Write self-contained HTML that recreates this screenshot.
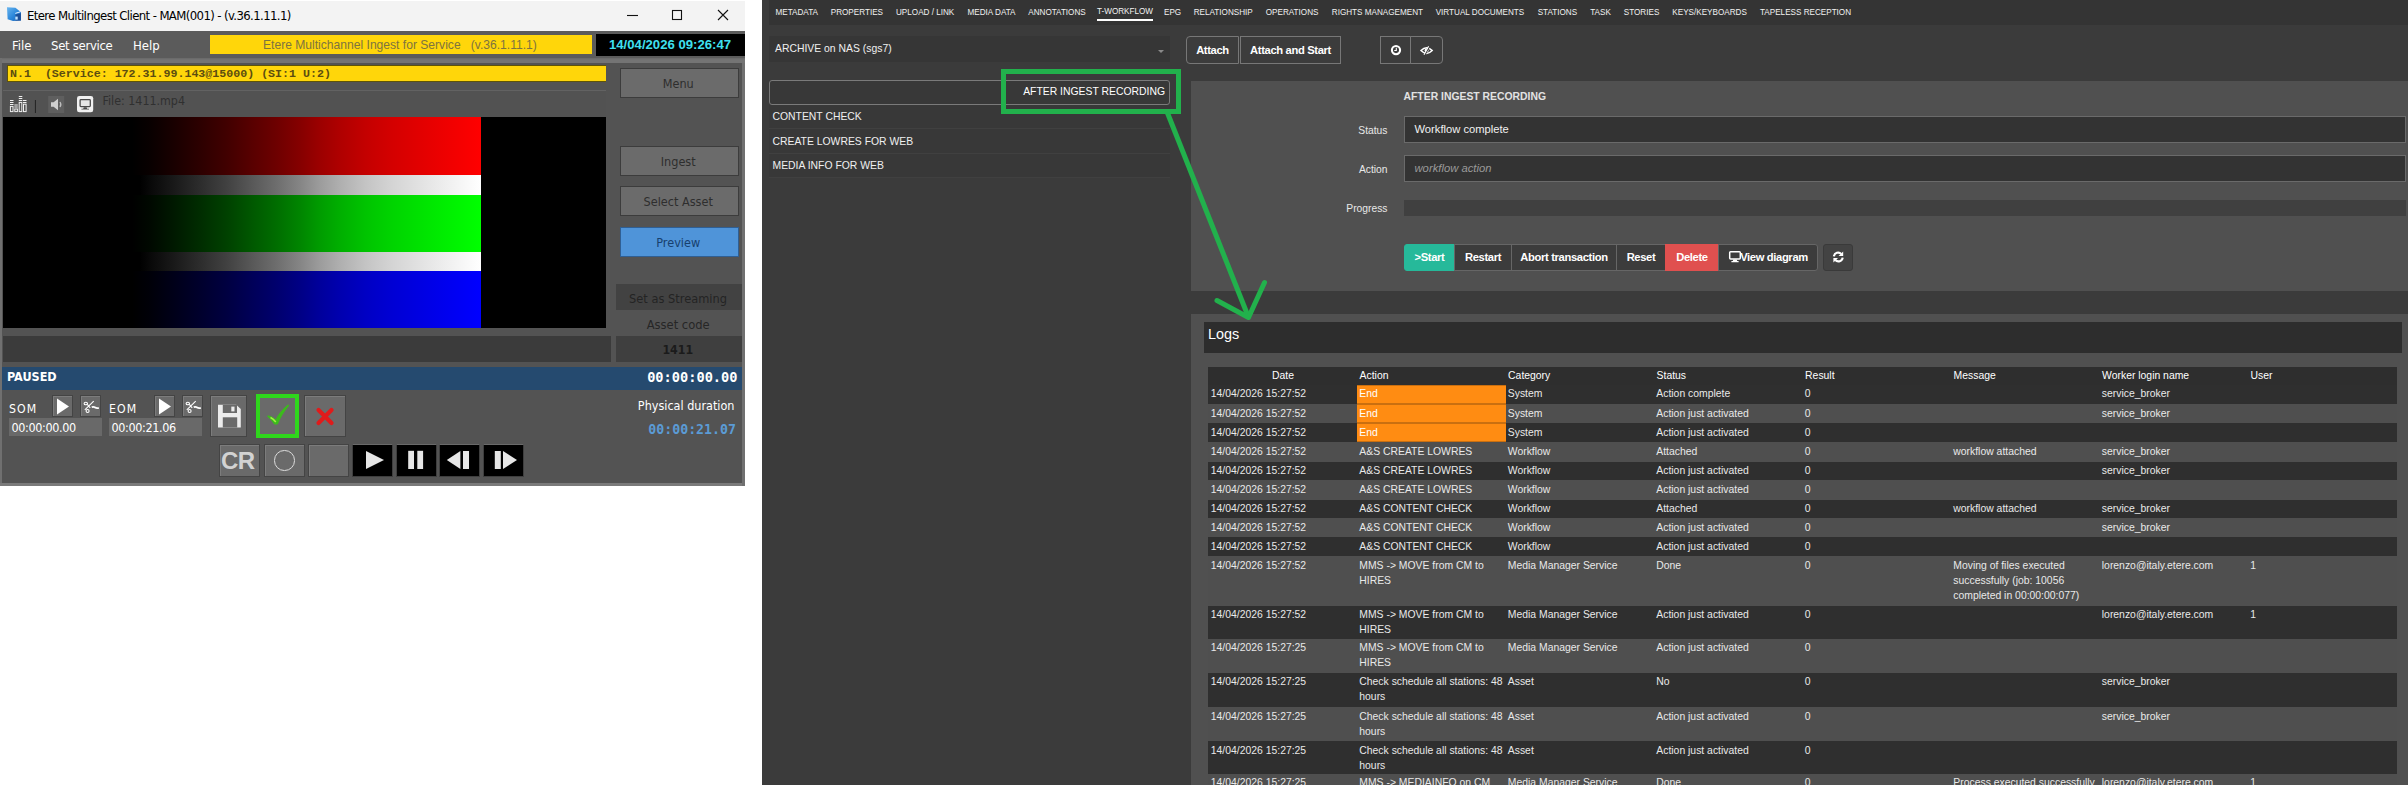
<!DOCTYPE html>
<html lang="en">
<head>
<meta charset="utf-8">
<title>Etere MultiIngest Client / T-Workflow</title>
<style>
*{box-sizing:border-box;margin:0;padding:0}
html,body{width:2408px;height:785px;overflow:hidden;background:#fff}
body{position:relative;font-family:"Liberation Sans",sans-serif}
.a{position:absolute}
.t{position:absolute;white-space:nowrap;line-height:1}
/* ---------- left window ---------- */
#win{position:absolute;left:0;top:0;width:745px;height:486px;background:#535353;overflow:hidden;font-family:"DejaVu Sans Condensed","DejaVu Sans","Liberation Sans",sans-serif}
#tb{left:0;top:0;width:745px;height:31px;background:#f3f3f3}
#menu{left:0;top:31px;width:745px;height:27px;background:#5b5b5b}
.mi{color:#fff;font-size:13px;top:39px}
.sb{position:absolute;left:620px;width:119px;height:30px;background:#6b6b6b;border:1px solid #3c3c3c;color:#2e2e2e;font-size:12.550px;text-align:center;line-height:29px;padding-right:2.600px}
.ib{position:absolute;background:#6a6a6a;border:1px solid #444;box-shadow:inset 1px 1px 0 #7c7c7c}
.kb{position:absolute;top:444.400px;height:33px;width:41px;background:#000;border:1px solid #3e3e3e;border-top-color:#6a6a6a}
/* ---------- right panel ---------- */
#rp{position:absolute;left:762px;top:0;width:1646px;height:785px;background:#3b3b3b;overflow:hidden;font-family:"Liberation Sans",sans-serif;color:#eee}

#tabs{position:absolute;left:7px;top:0;width:1639px;height:25px;background:#343434}
#tabs span{position:absolute;top:7.500px;font-size:8.150px;line-height:9px;color:#f2f2f2;white-space:nowrap}
.btn{position:absolute;height:27.500px;border:1px solid #777;background:#3c3c3c;color:#fff;font-weight:bold;font-size:11.200px;line-height:27px;text-align:center;white-space:nowrap;letter-spacing:-0.350px}
.li{position:absolute;left:7px;width:401px;height:24.500px;background:#383838;border-bottom:1px solid #404040;color:#f0f0f0;font-size:10.400px;line-height:23.500px;padding-left:3.500px;white-space:nowrap}
.lbl{position:absolute;left:560px;width:65.500px;text-align:right;font-size:10.300px;color:#e8e8e8;white-space:nowrap;line-height:12px}
.inp{position:absolute;left:642px;width:1002px;height:26px;background:#333;border:1px solid #6a6a6a;color:#f0f0f0;font-size:11.200px;line-height:24px;padding-left:9.500px;white-space:nowrap}
#lg{position:absolute;left:446px;top:367.200px;width:1188.500px;height:420px;font-size:10.400px;line-height:15.100px;color:#e9e9e9}
#lg .r{position:absolute;left:0;width:1188.500px;overflow:hidden}
#lg .r span{position:absolute;top:1.500px;white-space:nowrap}
#lg .h{background:#2e2e2e;color:#fff}
#lg .h span{top:0.600px}
#lg .d{background:#2f2f2f}
#lg .l{background:#4f4f4f}
#lg .o{position:absolute;top:0;background:#ff8c12;border-top:1px solid #c96f10;border-bottom:1px solid #c96f10}
#lg .o+span{color:#fff}
</style>
</head>
<body>
<div id="win">
  <div class="a" id="tb"></div><div class="a" style="left:0;top:0;width:745px;height:1px;background:#fff"></div>
  <svg class="a" style="left:6px;top:6px" width="17" height="17" viewBox="6 6 17 17">
    <defs><linearGradient id="ig" x1="0" y1="0" x2="1" y2="1"><stop offset="0" stop-color="#6ab6ef"/><stop offset="0.550" stop-color="#2a86da"/><stop offset="1" stop-color="#1b62b4"/></linearGradient></defs>
    <path d="M7 7.200L15.500 7.800L21 12.200V20.600L13 21L7.600 19.200z" fill="url(#ig)"/>
    <path d="M15.500 14.500L20.800 13.200V20.400H15.500z" fill="#1d4f97"/><path d="M15.300 13.400l5.300-1.700" stroke="#e8f2ff" stroke-width="1"/><rect x="15.300" y="16.600" width="2.400" height="3" fill="#bfe3ff"/>
  </svg>
  <div class="t" style="left:27px;top:9px;font-size:13px;letter-spacing:-0.600px;color:#000">Etere MultiIngest Client - MAM(001) - (v.36.1.11.1)</div>
  <svg class="a" style="left:620px;top:5px" width="120" height="22" viewBox="0 0 120 22" fill="none" stroke="#111" stroke-width="1.1">
    <path d="M7 10.5h11"/><rect x="52.5" y="5.500" width="9" height="9"/><path d="M98 5l10 10M108 5l-10 10"/>
  </svg>
  <div class="a" id="menu"></div>
  <div class="t mi" style="left:12px">File</div>
  <div class="t mi" style="left:51px;letter-spacing:-0.300px">Set service</div>
  <div class="t mi" style="left:133px">Help</div>
  <div class="a" style="left:210px;top:35px;width:382px;height:19px;background:#ffd60a"></div>
  <div class="t" style="left:263px;top:38.500px;font-size:12.100px;color:#7d7340;font-family:'Liberation Sans',sans-serif">Etere Multichannel Ingest for Service&nbsp;&nbsp; (v.36.1.11.1)</div>
  <div class="a" style="left:596px;top:34px;width:149px;height:22px;background:#000"></div>
  <div class="t" style="left:609px;top:37.500px;font-size:13.150px;font-weight:bold;color:#3fe0f0;font-family:'Liberation Sans',sans-serif">14/04/2026 09:26:47</div>
  <!-- channel panel -->
  <div class="a" style="left:0;top:58px;width:745px;height:5px;background:linear-gradient(#686868,#747474 40%,#747474)"></div>
  <div class="a" style="left:6.500px;top:64.500px;width:599.500px;height:17px;background:#ffd60a;border:1px solid #5f5408;border-right:0"></div>
  <div class="t" style="left:10px;top:67.500px;font-size:11.640px;font-weight:bold;color:#5c4d10;font-family:'Liberation Mono',monospace">N.1&nbsp; (Service: 172.31.99.143@15000) (SI:1 U:2)</div>
  <div class="a" style="left:3px;top:90px;width:603px;height:27px;background:#525252;border-top:1px solid #626262"></div>
  <div class="t" style="left:102.500px;top:94.500px;font-size:12.350px;color:#303030">File: 1411.mp4</div>
  <!-- video -->
  <div class="a" style="left:3px;top:117px;width:603px;height:211px;background:#000"></div>
  <div class="a" style="left:3px;top:117px;width:478px;height:58px;background:linear-gradient(90deg,#000 0,rgb(0,0,0) 129px,rgb(9,0,0) 148px,rgb(26,0,0) 172px,rgb(46,0,0) 199px,rgb(66,0,0) 225px,rgb(89,0,0) 250px,rgb(110,0,0) 274px,rgb(133,0,0) 297px,rgb(156,0,0) 317px,rgb(176,0,0) 338px,rgb(196,0,0) 363px,rgb(212,0,0) 389px,rgb(237,0,0) 440px,rgb(255,0,0) 478px)"></div>
  <div class="a" style="left:3px;top:175px;width:478px;height:19.500px;background:linear-gradient(90deg,#000 0,rgb(0,0,0) 137px,rgb(9,9,9) 148px,rgb(26,26,26) 172px,rgb(46,46,46) 199px,rgb(66,66,66) 225px,rgb(89,89,89) 250px,rgb(110,110,110) 274px,rgb(133,133,133) 297px,rgb(156,156,156) 317px,rgb(176,176,176) 338px,rgb(196,196,196) 363px,rgb(212,212,212) 389px,rgb(237,237,237) 440px,rgb(255,255,255) 478px)"></div>
  <div class="a" style="left:3px;top:194.500px;width:478px;height:57.500px;background:linear-gradient(90deg,#000 0,rgb(0,0,0) 129px,rgb(0,9,0) 148px,rgb(0,26,0) 172px,rgb(0,46,0) 199px,rgb(0,66,0) 225px,rgb(0,89,0) 250px,rgb(0,110,0) 274px,rgb(0,133,0) 297px,rgb(0,156,0) 317px,rgb(0,176,0) 338px,rgb(0,196,0) 363px,rgb(0,212,0) 389px,rgb(0,237,0) 440px,rgb(0,255,0) 478px)"></div>
  <div class="a" style="left:3px;top:252px;width:478px;height:18.500px;background:linear-gradient(90deg,#000 0,rgb(0,0,0) 137px,rgb(9,9,9) 148px,rgb(26,26,26) 172px,rgb(46,46,46) 199px,rgb(66,66,66) 225px,rgb(89,89,89) 250px,rgb(110,110,110) 274px,rgb(133,133,133) 297px,rgb(156,156,156) 317px,rgb(176,176,176) 338px,rgb(196,196,196) 363px,rgb(212,212,212) 389px,rgb(237,237,237) 440px,rgb(255,255,255) 478px)"></div>
  <div class="a" style="left:3px;top:270.500px;width:478px;height:57.500px;background:linear-gradient(90deg,#000 0,rgb(0,0,0) 129px,rgb(0,0,9) 148px,rgb(0,0,26) 172px,rgb(0,0,46) 199px,rgb(0,0,66) 225px,rgb(0,0,89) 250px,rgb(0,0,110) 274px,rgb(0,0,133) 297px,rgb(0,0,156) 317px,rgb(0,0,176) 338px,rgb(0,0,196) 363px,rgb(0,0,212) 389px,rgb(0,0,237) 440px,rgb(0,0,255) 478px)"></div>
  <!-- side buttons -->
  <div class="sb" style="top:67.500px">Menu</div>
  <div class="sb" style="top:145.500px">Ingest</div>
  <div class="sb" style="top:185.500px">Select Asset</div>
  <div class="sb" style="top:226.500px;background:#4f94d9;border-color:#2f5f94;color:#17406e">Preview</div>
  <div class="a" style="left:616px;top:284px;width:126px;height:26px;background:#424242"></div>
  <div class="t" style="left:615px;width:126px;text-align:center;top:292.800px;font-size:12.700px;color:#242424">Set as Streaming</div>
  <div class="t" style="left:615.200px;width:126px;text-align:center;top:318.800px;font-size:12.800px;color:#262626">Asset code</div>
  <div class="a" style="left:616px;top:336px;width:126px;height:26px;background:#3f3f3f"></div>
  <div class="t" style="left:614.800px;width:126px;text-align:center;top:343.500px;font-size:12.300px;font-weight:bold;color:#1b1b1b">1411</div>
  <div class="a" style="left:2.500px;top:336px;width:608.500px;height:26px;background:#3b3b3b"></div>
  <!-- status bar -->
  <div class="a" style="left:2.400px;top:367px;width:739.600px;height:23px;background:#254a6f"></div>
  <div class="t" style="left:7px;top:371px;font-size:12.500px;font-weight:bold;color:#fff">PAUSED</div>
  <div class="t" style="right:7.500px;top:371px;font-size:13.650px;font-weight:bold;color:#fff;font-family:'DejaVu Sans Mono','Liberation Mono',monospace">00:00:00.00</div>

  <!-- toolbar icons -->
  <svg class="a" style="left:9px;top:95px" width="90" height="19" viewBox="0 0 90 19">
    <g fill="none" stroke="#f0f0f0" stroke-width="1">
      <rect x="1.400" y="11.400" width="2.600" height="5.200"/><rect x="5.800" y="14" width="2.600" height="2.600"/><rect x="10.200" y="7.400" width="2.600" height="9.200"/><rect x="14.500" y="9.200" width="2.600" height="7.400"/>
    </g>
    <g fill="#f0f0f0"><rect x="1" y="5" width="3.500" height="1"/><rect x="1" y="7" width="3.500" height="1"/><rect x="1" y="9" width="3.500" height="1"/><rect x="5.300" y="9.500" width="3.500" height="1"/><rect x="5.300" y="11.500" width="3.500" height="1"/><rect x="9.800" y="1" width="3.500" height="1"/><rect x="9.800" y="3" width="3.500" height="1"/><rect x="9.800" y="5" width="3.500" height="1"/><rect x="14" y="5" width="3.500" height="1"/><rect x="14" y="7" width="3.500" height="1"/></g>
    <rect x="25.900" y="5" width="1.100" height="13" fill="#262626"/>
    <rect x="39.200" y="1" width="16" height="17" fill="#5f5f5f"/>
    <path d="M42 7.300h2.600l4.400-3.600v11.600l-4.400-3.600h-2.600z" fill="#cfcfcf"/><path d="M51 7q1.700 2.500 0 5" stroke="#bdbdbd" stroke-width="1.300" fill="none"/>
    <rect x="68" y="1" width="16.200" height="16.200" rx="2.300" fill="#f1f1f1"/>
    <rect x="71.100" y="4.600" width="10.200" height="7" rx="0.800" fill="#e6e6e6" stroke="#4a4a4a" stroke-width="1.300"/><path d="M74.800 12.200h2.800l0.600 1.500h1.800v0.900h-7.600v-0.900h1.800z" fill="#4a4a4a"/>
  </svg>
  <!-- SOM / EOM -->
  <div class="t" style="left:9px;top:402.700px;font-size:12.200px;letter-spacing:1.100px;color:#fff">SOM</div>
  <div class="ib" style="left:52px;top:395px;width:21px;height:22px"></div>
  <div class="ib" style="left:80px;top:395px;width:21px;height:22px"></div>
  <div class="a" style="left:9px;top:418px;width:93px;height:18px;background:#696969"></div>
  <div class="t" style="left:11.500px;top:422px;font-size:12.500px;letter-spacing:-0.370px;color:#fff">00:00:00.00</div>
  <div class="t" style="left:109px;top:402.700px;font-size:12.200px;letter-spacing:1.100px;color:#fff">EOM</div>
  <div class="ib" style="left:154px;top:395px;width:21px;height:22px"></div>
  <div class="ib" style="left:182px;top:395px;width:21px;height:22px"></div>
  <div class="a" style="left:109px;top:418px;width:93px;height:18px;background:#696969"></div>
  <div class="t" style="left:111.500px;top:422px;font-size:12.500px;letter-spacing:-0.370px;color:#fff">00:00:21.06</div>
  <svg class="a" style="left:52px;top:395px" width="152" height="22" viewBox="0 0 152 22">
    <path d="M5 3.500L17 11.500L5 19.500z" fill="#fff"/>
    <path d="M107 3.500L119 11.500L107 19.500z" fill="#fff"/>
    <g fill="none" stroke="#fff" stroke-width="1.100">
      <ellipse cx="33.800" cy="8.500" rx="1.700" ry="1.300"/><circle cx="35.600" cy="16" r="1.500"/><path d="M32.800 14.800L41.700 6.200M35.300 9.300L38.200 12.800"/><path d="M39.700 12.200q2-0.700 3.500 0.300t3.600 0.300" stroke-width="1.900"/>
    </g>
    <g transform="translate(102 0)" fill="none" stroke="#fff" stroke-width="1.100">
      <ellipse cx="33.800" cy="8.500" rx="1.700" ry="1.300"/><circle cx="35.600" cy="16" r="1.500"/><path d="M32.800 14.800L41.700 6.200M35.300 9.300L38.200 12.800"/><path d="M39.700 12.200q2-0.700 3.500 0.300t3.600 0.300" stroke-width="1.900"/>
    </g>
  </svg>
  <!-- save / ok / cancel -->
  <div class="ib" style="left:210px;top:395px;width:37px;height:42px"></div>
  <svg class="a" style="left:217px;top:404px" width="25" height="24" viewBox="0 0 25 24">
    <path d="M1 0.800h18.200l4.600 4.200V23.500H1z" fill="#ececec"/><rect x="5.800" y="0.800" width="14.200" height="8.200" fill="#6a6a6a"/><rect x="14.300" y="2.600" width="3.200" height="4.800" fill="#ececec"/><rect x="5.800" y="13.300" width="14.400" height="10.200" fill="#6a6a6a"/>
  </svg>
  <div class="a" style="left:255.500px;top:393.500px;width:43.500px;height:44.500px;background:#6a6a6a;border:4.200px solid #2fd71c"></div>
  <svg class="a" style="left:265px;top:403px" width="26" height="24" viewBox="0 0 26 24">
    <path d="M3 13.200Q7.500 13.800 10.800 17.800Q15 9 23.200 2.400Q16 11 12.200 20.600L9.800 20.800Q7 16.500 3 13.200z" fill="#3cbb1c" stroke="#3cbb1c" stroke-width="1.600" stroke-linejoin="round"/>
    <path d="M5.500 14.500Q8.500 16 10.800 19" stroke="#a5ee45" stroke-width="1.500" fill="none"/>
  </svg>
  <div class="ib" style="left:304px;top:395px;width:42px;height:42px"></div>
  <svg class="a" style="left:315px;top:407px" width="20" height="19" viewBox="0 0 20 19">
    <path d="M3.500 3L16.500 16M16.500 3L3.500 16" stroke="#e01b1b" stroke-width="4.200" stroke-linecap="round"/>
  </svg>
  <!-- transport -->
  <div class="ib" style="left:219px;top:444px;width:41px;height:32.500px"></div>
  <div class="t" style="left:217.500px;width:40.500px;text-align:center;top:448.500px;font-size:24px;font-weight:bold;color:#d2d2d2;font-family:'Liberation Sans',sans-serif;letter-spacing:-0.500px">CR</div>
  <div class="ib" style="left:264px;top:444px;width:40.500px;height:32.500px"></div>
  <div class="a" style="left:274px;top:450px;width:20.500px;height:20.500px;border:1.300px solid #dcdcdc;border-radius:50%"></div>
  <div class="ib" style="left:308px;top:444px;width:40.500px;height:32.500px"></div>
  <div class="kb" style="left:352px;width:41px"></div>
  <div class="kb" style="left:395.500px;width:41px"></div>
  <div class="kb" style="left:439.400px;width:41px"></div>
  <div class="kb" style="left:483.400px;width:41px"></div>
  <svg class="a" style="left:352px;top:444px" width="172" height="33" viewBox="0 0 172 33" fill="#e6e6e6">
    <path d="M14 7L32 16L14 25z"/>
    <rect x="56.200" y="6.800" width="5.800" height="18.200"/><rect x="65.300" y="6.800" width="5.800" height="18.200"/>
    <path d="M94.800 16L108.400 7v18z"/><rect x="111" y="7" width="6" height="18"/>
    <rect x="142.800" y="7" width="6" height="18"/><path d="M165 16L151 7v18z"/>
  </svg>
  <div class="t" style="right:10.500px;top:399.700px;font-size:12.500px;color:#fff">Physical duration</div>
  <div class="t" style="right:9px;top:423px;font-size:13.250px;font-weight:bold;color:#5b9bd5;font-family:'DejaVu Sans Mono','Liberation Mono',monospace">00:00:21.07</div>
  <!-- window borders -->
  <div class="a" style="left:0;top:58px;width:2.400px;height:428px;background:#707070"></div>
  <div class="a" style="left:0;top:483px;width:745px;height:3px;background:#7a7a7a"></div>
  <div class="a" style="left:742px;top:63px;width:3px;height:423px;background:#707070"></div>
</div>
<div id="rp">
  <div id="tabs"><span style="left:6.50px">METADATA</span><span style="left:61.75px">PROPERTIES</span><span style="left:127.00px">UPLOAD / LINK</span><span style="left:198.50px">MEDIA DATA</span><span style="left:259.25px">ANNOTATIONS</span><span style="left:328.00px;top:6.5px">T-WORKFLOW</span><span style="left:395.00px">EPG</span><span style="left:424.75px">RELATIONSHIP</span><span style="left:496.75px">OPERATIONS</span><span style="left:562.80px">RIGHTS MANAGEMENT</span><span style="left:666.70px">VIRTUAL DOCUMENTS</span><span style="left:768.70px">STATIONS</span><span style="left:821.20px">TASK</span><span style="left:854.80px">STORIES</span><span style="left:903.30px">KEYS/KEYBOARDS</span><span style="left:991.00px">TAPELESS RECEPTION</span><i class="a" style="left:328px;top:19px;width:56px;height:2px;background:#fff"></i></div>
  <div class="a" style="left:7px;top:36px;width:400.500px;height:25.500px;background:#363636"></div>
  <div class="t" style="left:13px;top:43.500px;font-size:10.400px;color:#f0f0f0">ARCHIVE on NAS (sgs7)</div>
  <div class="a" style="left:396px;top:50px;border:3px solid transparent;border-top:3.500px solid #8a8a8a;border-bottom:0"></div>
  <div class="btn" style="left:424px;top:36px;width:53px;border-radius:4px 0 0 4px">Attach</div>
  <div class="btn" style="left:478px;top:36px;width:101px">Attach and Start</div>
  <div class="btn" style="left:618px;top:36px;width:31px"></div>
  <div class="btn" style="left:648px;top:36px;width:33px;border-radius:0 4px 4px 0"></div>
  <svg class="a" style="left:626px;top:42px" width="48" height="16" viewBox="0 0 48 16">
    <circle cx="8" cy="8.100" r="4.100" fill="none" stroke="#fff" stroke-width="2.100"/><path d="M8.300 5.800v2.700h-2" stroke="#fff" stroke-width="1.100" fill="none"/>
    <path d="M33 8.600q5.600-5.800 11.200 0q-5.600 5.800-11.200 0z" fill="none" stroke="#fff" stroke-width="1.500"/><circle cx="38.600" cy="8.600" r="2" fill="#fff"/><path d="M41.600 4.200l-5 9" stroke="#3c3c3c" stroke-width="1.500"/><path d="M40.600 4.200l-4.600 8.600" stroke="#fff" stroke-width="1.100"/>
  </svg>
  <!-- workflow list -->
  <div class="a" style="left:7px;top:80px;width:401px;height:24.500px;border:1px solid #7a7a7a;border-radius:3px;background:#383838"></div>
  <div class="t" style="left:200px;width:203px;text-align:right;top:86.500px;font-size:10.400px;color:#fff">AFTER INGEST RECORDING</div>
  <div class="li" style="top:104.500px">CONTENT CHECK</div>
  <div class="li" style="top:129px;line-height:25.500px">CREATE LOWRES FOR WEB</div>
  <div class="li" style="top:153.500px;line-height:24.500px">MEDIA INFO FOR WEB</div>
  <!-- detail panel -->
  <div class="a" style="left:428.500px;top:80.500px;width:1218px;height:210px;background:#505050"></div>
  <div class="t" style="left:641.500px;top:92px;font-size:10.400px;font-weight:bold;color:#e2e2e2">AFTER INGEST RECORDING</div>
  <div class="lbl" style="top:124.500px">Status</div>
  <div class="inp" style="top:116px;height:26.500px;line-height:25px">Workflow complete</div>
  <div class="lbl" style="top:163.500px">Action</div>
  <div class="inp" style="top:155px;height:26.500px;line-height:25px;color:#9a9a9a;font-style:italic;font-size:11.250px">workflow action</div>
  <div class="lbl" style="top:202.500px">Progress</div>
  <div class="a" style="left:642px;top:200px;width:1002px;height:16px;background:#404040"></div>
  <div class="btn" style="line-height:25.500px;left:642px;top:244px;width:51px;background:#26b99a;border-color:#26b99a;border-radius:3px 0 0 3px;height:27px">&gt;Start</div>
  <div class="btn" style="line-height:25.500px;border-color:#666;left:692px;top:244px;width:58px;height:27px">Restart</div>
  <div class="btn" style="line-height:25.500px;border-color:#666;left:749px;top:244px;width:106px;height:27px">Abort transaction</div>
  <div class="btn" style="line-height:25.500px;border-color:#666;left:854px;top:244px;width:50px;height:27px">Reset</div>
  <div class="btn" style="line-height:25.500px;left:903px;top:244px;width:54px;background:#e0504f;border-color:#e0504f;height:27px">Delete</div>
  <div class="btn" style="line-height:25.500px;border-color:#666;left:956px;top:244px;width:100px;border-radius:0 3px 3px 0;height:27px;padding-left:12px">View diagram</div>
  <div class="btn" style="left:1060.500px;top:244px;width:30.500px;border-radius:3px;height:27px;border-color:#3a3a3a;background:#434343"></div>
  <svg class="a" style="left:966px;top:250px" width="124" height="14" viewBox="0 0 124 14">
    <rect x="1.700" y="1.700" width="10.600" height="7.200" rx="0.900" fill="none" stroke="#fff" stroke-width="1.500"/><path d="M5.300 9.500h3.400l0.500 1.600h1.400v1.100h-7.200v-1.100h1.400z" fill="#fff"/>
    <path d="M105.900 6.400a4.300 4.300 0 0 1 7.400-2.400" fill="none" stroke="#fff" stroke-width="2.100"/><path d="M115.200 1.500v4.600h-4.600z" fill="#fff"/>
    <path d="M114.700 7.600a4.300 4.300 0 0 1-7.400 2.400" fill="none" stroke="#fff" stroke-width="2.100"/><path d="M105.400 12.500v-4.600h4.600z" fill="#fff"/>
  </svg>
  <!-- logs -->
  <div class="a" style="left:428.500px;top:313.750px;width:1218px;height:472px;background:#505050"></div>
  <div class="a" style="left:442px;top:322px;width:1198px;height:31px;background:#2d2d2d"></div>
  <div class="t" style="left:446px;top:326.500px;font-size:14.400px;color:#fff">Logs</div>
  <div id="lg">
<div class="r h" style="top:0;height:17.9px"><span style="left:0.8px;width:148.5px;text-align:center">Date</span><span style="left:151.6px">Action</span><span style="left:300.1px">Category</span><span style="left:448.6px">Status</span><span style="left:597.1px">Result</span><span style="left:745.6px">Message</span><span style="left:894.1px">Worker login name</span><span style="left:1042.6px">User</span></div>
<div class="r d" style="top:17.7px;height:19.2px"><span style="left:2.8px">14/04/2026 15:27:52</span><i class="o" style="left:148.5px;width:149.2px;height:19.2px"></i><span style="left:151.3px">End</span><span style="left:299.8px">System</span><span style="left:448.3px">Action complete</span><span style="left:596.8px">0</span><span style="left:893.8px">service_broker</span></div>
<div class="r l" style="top:36.9px;height:19.3px"><span style="left:2.8px">14/04/2026 15:27:52</span><i class="o" style="left:148.5px;width:149.2px;height:19.3px"></i><span style="left:151.3px">End</span><span style="left:299.8px">System</span><span style="left:448.3px">Action just activated</span><span style="left:596.8px">0</span><span style="left:893.8px">service_broker</span></div>
<div class="r d" style="top:56.2px;height:19.0px"><span style="left:2.8px">14/04/2026 15:27:52</span><i class="o" style="left:148.5px;width:149.2px;height:19.0px"></i><span style="left:151.3px">End</span><span style="left:299.8px">System</span><span style="left:448.3px">Action just activated</span><span style="left:596.8px">0</span></div>
<div class="r l" style="top:75.2px;height:19.2px"><span style="left:2.8px">14/04/2026 15:27:52</span><span style="left:151.3px">A&amp;S CREATE LOWRES</span><span style="left:299.8px">Workflow</span><span style="left:448.3px">Attached</span><span style="left:596.8px">0</span><span style="left:745.3px">workflow attached</span><span style="left:893.8px">service_broker</span></div>
<div class="r d" style="top:94.4px;height:18.7px"><span style="left:2.8px">14/04/2026 15:27:52</span><span style="left:151.3px">A&amp;S CREATE LOWRES</span><span style="left:299.8px">Workflow</span><span style="left:448.3px">Action just activated</span><span style="left:596.8px">0</span><span style="left:893.8px">service_broker</span></div>
<div class="r l" style="top:113.1px;height:19.3px"><span style="left:2.8px">14/04/2026 15:27:52</span><span style="left:151.3px">A&amp;S CREATE LOWRES</span><span style="left:299.8px">Workflow</span><span style="left:448.3px">Action just activated</span><span style="left:596.8px">0</span></div>
<div class="r d" style="top:132.4px;height:18.7px"><span style="left:2.8px">14/04/2026 15:27:52</span><span style="left:151.3px">A&amp;S CONTENT CHECK</span><span style="left:299.8px">Workflow</span><span style="left:448.3px">Attached</span><span style="left:596.8px">0</span><span style="left:745.3px">workflow attached</span><span style="left:893.8px">service_broker</span></div>
<div class="r l" style="top:151.1px;height:19.2px"><span style="left:2.8px">14/04/2026 15:27:52</span><span style="left:151.3px">A&amp;S CONTENT CHECK</span><span style="left:299.8px">Workflow</span><span style="left:448.3px">Action just activated</span><span style="left:596.8px">0</span><span style="left:893.8px">service_broker</span></div>
<div class="r d" style="top:170.3px;height:18.6px"><span style="left:2.8px">14/04/2026 15:27:52</span><span style="left:151.3px">A&amp;S CONTENT CHECK</span><span style="left:299.8px">Workflow</span><span style="left:448.3px">Action just activated</span><span style="left:596.8px">0</span></div>
<div class="r l" style="top:188.9px;height:49.7px"><span style="left:2.8px">14/04/2026 15:27:52</span><span style="left:151.3px">MMS -&gt; MOVE from CM to<br>HIRES</span><span style="left:299.8px">Media Manager Service</span><span style="left:448.3px">Done</span><span style="left:596.8px">0</span><span style="left:745.3px">Moving of files executed<br>successfully (job: 10056<br>completed in 00:00:00:077)</span><span style="left:893.8px">lorenzo@italy.etere.com</span><span style="left:1042.3px">1</span></div>
<div class="r d" style="top:238.6px;height:32.9px"><span style="left:2.8px">14/04/2026 15:27:52</span><span style="left:151.3px">MMS -&gt; MOVE from CM to<br>HIRES</span><span style="left:299.8px">Media Manager Service</span><span style="left:448.3px">Action just activated</span><span style="left:596.8px">0</span><span style="left:893.8px">lorenzo@italy.etere.com</span><span style="left:1042.3px">1</span></div>
<div class="r l" style="top:271.5px;height:34.2px"><span style="left:2.8px">14/04/2026 15:27:25</span><span style="left:151.3px">MMS -&gt; MOVE from CM to<br>HIRES</span><span style="left:299.8px">Media Manager Service</span><span style="left:448.3px">Action just activated</span><span style="left:596.8px">0</span></div>
<div class="r d" style="top:305.7px;height:34.2px"><span style="left:2.8px">14/04/2026 15:27:25</span><span style="left:151.3px">Check schedule all stations: 48<br>hours</span><span style="left:299.8px">Asset</span><span style="left:448.3px">No</span><span style="left:596.8px">0</span><span style="left:893.8px">service_broker</span></div>
<div class="r l" style="top:339.9px;height:34.2px"><span style="left:2.8px">14/04/2026 15:27:25</span><span style="left:151.3px">Check schedule all stations: 48<br>hours</span><span style="left:299.8px">Asset</span><span style="left:448.3px">Action just activated</span><span style="left:596.8px">0</span><span style="left:893.8px">service_broker</span></div>
<div class="r d" style="top:374.1px;height:32.5px"><span style="left:2.8px">14/04/2026 15:27:25</span><span style="left:151.3px">Check schedule all stations: 48<br>hours</span><span style="left:299.8px">Asset</span><span style="left:448.3px">Action just activated</span><span style="left:596.8px">0</span></div>
<div class="r l" style="top:406.6px;height:35.2px"><span style="left:2.8px">14/04/2026 15:27:25</span><span style="left:151.3px">MMS -&gt; MEDIAINFO on CM<br>file</span><span style="left:299.8px">Media Manager Service</span><span style="left:448.3px">Done</span><span style="left:596.8px">0</span><span style="left:745.3px">Process executed successfully<br>(job: 10055)</span><span style="left:893.8px">lorenzo@italy.etere.com</span><span style="left:1042.3px">1</span></div>
</div>
  <!-- annotation -->
  <svg class="a" style="left:0;top:0" width="1646" height="785" viewBox="762 0 1646 785" fill="none" stroke="#22b14c">
    <rect x="1003.500" y="71.500" width="175" height="40" stroke-width="5"/>
    <path d="M1167.500 113L1248 316" stroke-width="5"/>
    <path d="M1217 300.500L1248.500 317.500L1264.500 282.500" stroke-width="5" stroke-linecap="round" stroke-linejoin="round"/>
  </svg>
</div>
</body>
</html>
